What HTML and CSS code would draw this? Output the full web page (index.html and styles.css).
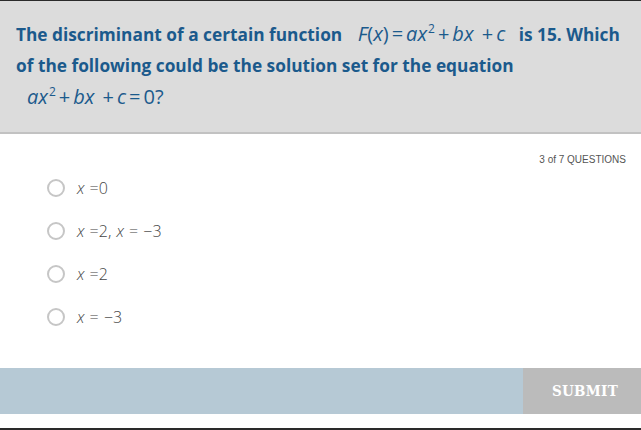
FILE: index.html
```html
<!DOCTYPE html>
<html>
<head>
<meta charset="utf-8">
<link rel="stylesheet" href="styles.css">
</head>
<body>
<div class="frame">
  <div class="question">
    <p class="qtext">The discriminant of a certain function <span class="math m1"><i>F</i>(<i>x</i>)<span class="op">=</span><i>ax</i><sup>2</sup><span class="op">+</span><i>bx</i> <span class="op">+</span><i>c</i></span> is 15. Which of the following could be the solution set for the equation <span class="math m2"><i>ax</i><sup>2</sup><span class="op">+</span><i>bx</i> <span class="op">+</span><i>c</i><span class="op">=</span>0?</span></p>
  </div>
  <div class="body">
    <div class="counter">3 of 7 QUESTIONS</div>
    <ul class="options">
      <li class="option"><span class="radio"></span><span class="ans"><i>x</i> =0</span></li>
      <li class="option"><span class="radio"></span><span class="ans"><i>x</i> =2, <i>x</i> = −3</span></li>
      <li class="option"><span class="radio"></span><span class="ans"><i>x</i> =2</span></li>
      <li class="option"><span class="radio"></span><span class="ans"><i>x</i> = −3</span></li>
    </ul>
  </div>
  <div class="footer">
    <div class="spacer"></div>
    <button class="submit">SUBMIT</button>
  </div>
</div>
</body>
</html>
```
FILE: styles.css
```css
html, body {
  margin: 0;
  padding: 0;
  background: #ffffff;
}
.frame {
  width: 641px;
  height: 430px;
  box-sizing: border-box;
  border-top: 1px solid #2a2a2a;
  border-bottom: 2px solid #2a2a2a;
  display: flex;
  flex-direction: column;
  overflow: hidden;
}
.question {
  background: #dcdcdc;
  border-bottom: 2px solid #c2c2c2;
  height: 133px;
  flex: none;
  box-sizing: border-box;
  padding: 17px 12px 0 16px;
}
.qtext {
  margin: 0;
  font-family: "Open Sans", sans-serif;
  font-weight: 700;
  font-size: 17.3px;
  line-height: 31px;
  color: #1b5a8c;
}
.math {
  display: inline-block;
  font-family: "Open Sans", sans-serif;
  font-weight: 400;
  font-size: 20px;
  line-height: 31px;
}
.math i {
  font-style: italic;
}
.math .op {
  padding: 0 3px;
}
.math sup {
  font-size: 12px;
  line-height: 0;
  vertical-align: 8px;
  margin-left: 1px;
}
.m1 {
  margin: 0 9px 0 11px;
}
.m2 {
  margin-left: 11px;
}
.body {
  flex: 1;
  padding: 20px 15px 0 47px;
  display: flex;
  flex-direction: column;
}
.counter {
  align-self: flex-end;
  font-family: "Liberation Sans", Arial, sans-serif;
  font-size: 10px;
  color: #555555;
  height: 16px;
}
.options {
  list-style: none;
  margin: 8px 0 0 0;
  padding: 0;
  display: flex;
  flex-direction: column;
  gap: 23px;
}
.option {
  display: flex;
  align-items: center;
  height: 20px;
}
.radio {
  width: 14px;
  height: 14px;
  border: 2px solid #c6c6c6;
  border-radius: 50%;
  margin-right: 12px;
}
.ans {
  font-family: "Open Sans", sans-serif;
  font-size: 16px;
  color: #444444;
  font-weight: 300;
  word-spacing: 1px;
}
.ans i {
  font-style: italic;
}
.footer {
  height: 46px;
  flex: none;
  margin-bottom: 14px;
  display: flex;
  background: #b6c9d5;
}
.spacer {
  flex: 1;
}
.submit {
  width: 118px;
  border: none;
  background: #bbbbbb;
  color: #ffffff;
  font-family: "DejaVu Serif Condensed", "DejaVu Serif", serif;
  font-stretch: condensed;
  font-weight: 700;
  font-size: 15px;
  letter-spacing: 0.3px;
  padding: 0 0 0 6px;
}
```
